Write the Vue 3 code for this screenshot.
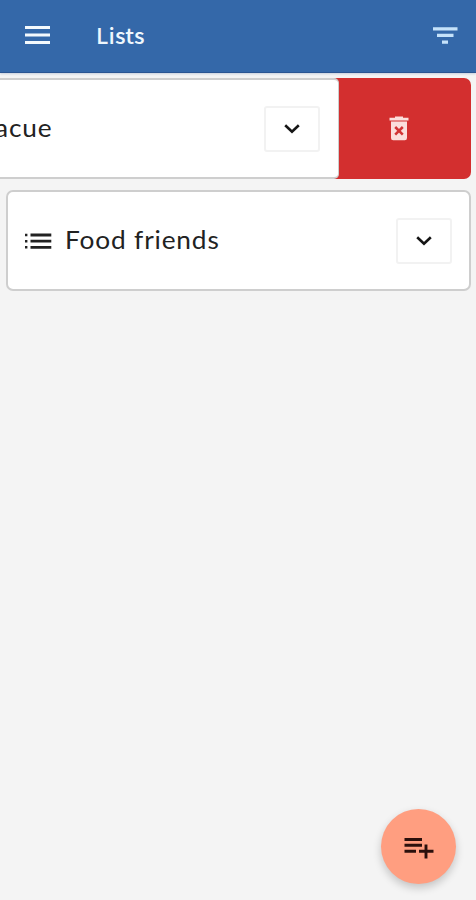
<script setup>
const lists = [
  { name: 'acue', swiped: true },
  { name: 'Food friends', swiped: false },
]
</script>

<template>
  <div class="screen">
    <header class="bar">
      <svg class="menu" viewBox="0 0 26 20" aria-hidden="true">
        <path d="M1 2.5H26M1 10H26M1 17.5H26" stroke="#f3f9fd" stroke-width="3" />
      </svg>
      <h1 class="title">Lists</h1>
      <svg class="filter" viewBox="0 0 26 20" aria-hidden="true">
        <path d="M1 3.8H25.5M5 10.4H21.5M10 17.2H16" stroke="#c5e2fa" stroke-width="3.2" />
      </svg>
    </header>

    <main class="lists">
      <div v-for="list in lists" :key="list.name" class="row" :class="{ swiped: list.swiped }">
        <div class="card">
          <svg v-if="!list.swiped" class="bullets" viewBox="0 0 28 18" aria-hidden="true">
            <path d="M6.5 3H27.3M6.5 9.2H27.3M6.5 15.3H27.3" stroke="#222" stroke-width="2.8" />
            <path d="M1 3H3.4M1 9.2H3.4M1 15.3H3.4" stroke="#222" stroke-width="2.6" />
          </svg>
          <span class="name">{{ list.name }}</span>
          <button class="expand" aria-label="Expand">
            <svg viewBox="0 0 16 10" aria-hidden="true">
              <path d="M1.2 1.3L8 7.8L14.8 1.3" fill="none" stroke="#151515" stroke-width="2.6" />
            </svg>
          </button>
        </div>
        <button v-if="list.swiped" class="remove" aria-label="Delete">
          <svg viewBox="0 0 20 25" aria-hidden="true">
            <path
              fill="#fbdedc"
              fill-rule="evenodd"
              d="M6 0.5H14V1.7H19.5V4.5H0.5V1.7H6ZM2 5.5H18V22Q18 24.3 15.8 24.3H4.2Q2 24.3 2 22Z"
            />
            <path d="M6.2 11L13.8 18.6M13.8 11L6.2 18.6" stroke="#d23435" stroke-width="2.5" />
          </svg>
        </button>
      </div>
    </main>

    <button class="fab" aria-label="Add list">
      <svg viewBox="0 0 30 22" aria-hidden="true">
        <path
          d="M0.5 2.5H18M0.5 8.3H18M0.5 14.2H12M15 14.2H29.5M22 7.5V21.5"
          stroke="#2b100c"
          stroke-width="2.9"
        />
      </svg>
    </button>
  </div>
</template>

<style>
body {
  background: #f4f4f4;
}
</style>

<style scoped>
.screen {
  position: relative;
  width: 476px;
  height: 900px;
  overflow: hidden;
  background: #f4f4f4;
  color: #222;
  font-family: Lato, 'Liberation Sans', sans-serif;
}
button {
  padding: 0;
  border: 0;
}
svg {
  display: block;
}
.bar {
  display: flex;
  align-items: center;
  box-sizing: border-box;
  height: 73px;
  padding: 0 18px 2px 24px;
  border-bottom: 1px solid #2a5592;
  background: #3468a9;
  box-shadow: 0 1px 2px #c6cfdc;
}
.menu {
  width: 26px;
  height: 20px;
}
.title {
  margin: 0 0 2px 46px;
  color: #eef7fd;
  font: 500 22px/30px 'Noto Sans CJK SC', 'Noto Sans', sans-serif;
  letter-spacing: 0.2px;
}
.filter {
  width: 26px;
  height: 20px;
  margin-left: auto;
}
.lists {
  display: flex;
  flex-direction: column;
  gap: 11px;
  padding: 5px 5px 0 6px;
}
.row {
  display: flex;
  height: 101px;
  border-radius: 7px;
}
.card {
  display: flex;
  align-items: center;
  box-sizing: border-box;
  width: 100%;
  padding: 0 17px 0 16px;
  border: 2px solid #cecece;
  border-radius: 7px;
  background: #fff;
}
.swiped {
  margin-left: -6px;
  border-radius: 0 7px 7px 0;
  background: #d32f2f;
}
.swiped .card {
  width: 339px;
  padding: 0 18px 0 0;
  border-left: 0;
  border-right-width: 1px;
  border-radius: 0 5px 5px 0;
}
.bullets {
  width: 28px;
  height: 18px;
  margin-right: 13px;
}
.name {
  margin-bottom: 3px;
  font-size: 25px;
  line-height: 34px;
  letter-spacing: 0.8px;
  white-space: nowrap;
  transform: scaleX(1.05);
  transform-origin: left;
}
.swiped .name {
  margin-left: -5px;
}
.expand {
  display: flex;
  align-items: center;
  justify-content: center;
  box-sizing: border-box;
  width: 56px;
  height: 46px;
  margin-left: auto;
  border: 2px solid #f2f2f2;
  border-radius: 3px;
  background: #fff;
}
.expand svg {
  width: 16px;
  height: 10px;
  margin-top: 1px;
}
.remove {
  display: flex;
  flex: 1;
  align-items: center;
  padding-left: 50px;
  border-radius: 0 7px 7px 0;
  background: transparent;
}
.remove svg {
  width: 20px;
  height: 25px;
}
.fab {
  position: absolute;
  right: 20px;
  bottom: 16px;
  display: flex;
  align-items: center;
  justify-content: center;
  width: 75px;
  height: 75px;
  border-radius: 50%;
  background: #ff9e80;
  box-shadow: 0 4px 8px rgba(0, 0, 0, 0.2);
}
.fab svg {
  width: 30px;
  height: 22px;
  margin-top: 3px;
}
</style>
